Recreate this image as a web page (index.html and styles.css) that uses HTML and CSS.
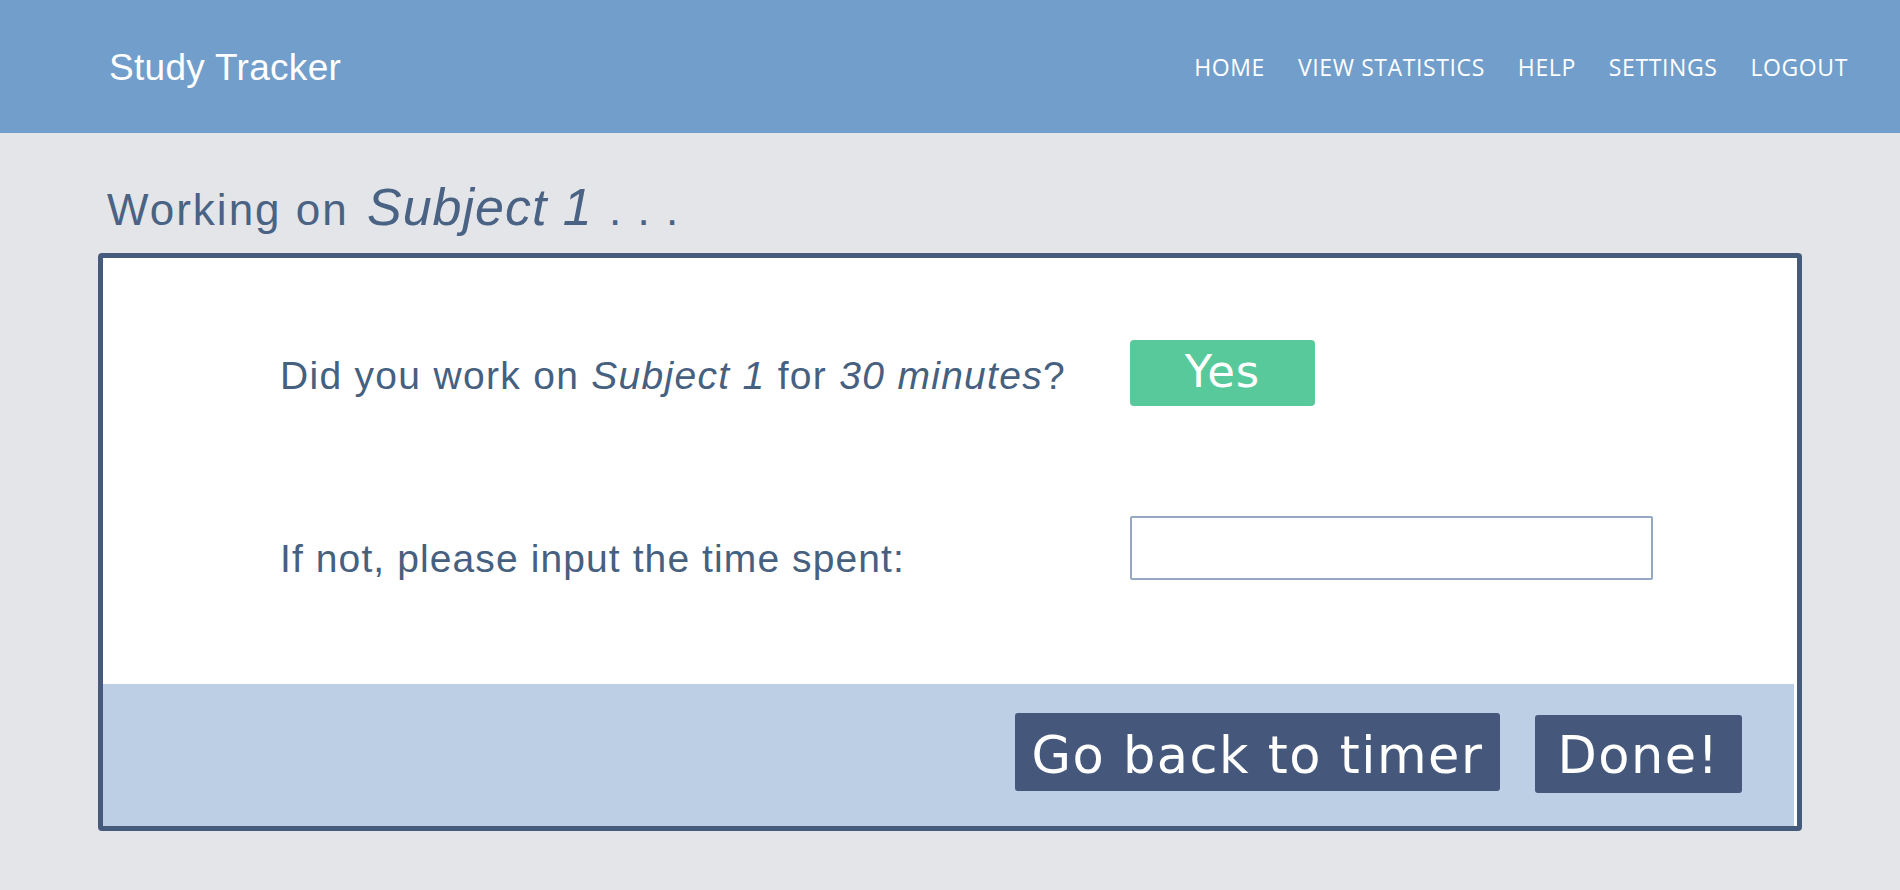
FILE: index.html
```html
<!DOCTYPE html>
<html lang="en">
<head>
<meta charset="utf-8">
<title>Study Tracker</title>
<link rel="stylesheet" href="styles.css">
</head>
<body>
<header class="topbar">
  <div class="brand">Study Tracker</div>
  <nav class="nav">
    <a class="nav-link" href="#">HOME</a>
    <a class="nav-link" href="#">VIEW STATISTICS</a>
    <a class="nav-link" href="#">HELP</a>
    <a class="nav-link" href="#">SETTINGS</a>
    <a class="nav-link" href="#">LOGOUT</a>
  </nav>
</header>
<main class="content">
  <h1 class="title">Working on <em class="title-subject">Subject 1</em> . . .</h1>
  <section class="card">
    <div class="card-body">
      <div class="label label-first">Did you work on <em>Subject 1</em> for <em>30 minutes</em>?</div>
      <div class="control"><button class="btn-yes">Yes</button></div>
      <div class="label label-second">If not, please input the time spent:</div>
      <div class="control"><input class="time-input" type="text"></div>
    </div>
    <div class="card-footer">
      <button class="btn-dark btn-back">Go back to timer</button>
      <button class="btn-dark btn-done">Done!</button>
    </div>
  </section>
</main>
</body>
</html>
```
FILE: styles.css
```css
html, body {
  margin: 0;
  padding: 0;
}
body {
  background: #e3e5e9;
  font-family: "Liberation Sans", Arial, sans-serif;
  color: #46607f;
  width: 1900px;
  height: 890px;
  overflow: hidden;
}
.topbar {
  height: 133px;
  background: #729ecb;
  display: flex;
  align-items: center;
  justify-content: space-between;
  padding: 0 52px 0 109px;
}
.brand {
  color: #ffffff;
  font-size: 37px;
  letter-spacing: 0.3px;
  padding-top: 2px;
}
.nav {
  display: flex;
  gap: 33px;
}
.nav-link {
  font-family: "Open Sans", sans-serif;
  font-size: 23px;
  color: #ffffff;
  text-decoration: none;
  letter-spacing: 0.6px;
}
.content {
  padding: 0 98px;
}
.title {
  margin: 44px 0 13px 9px;
  font-weight: normal;
  font-size: 44px;
  line-height: 60px;
  letter-spacing: 2px;
  color: #4a6283;
}
.title-subject {
  font-size: 52px;
  letter-spacing: 1px;
  margin-left: 4px;
  margin-right: 2px;
}
.card {
  background: #ffffff;
  border: 5px solid #465a7c;
  border-radius: 4px;
}
.card-body {
  display: grid;
  grid-template-columns: 850px auto;
  grid-template-rows: 66px 64px;
  row-gap: 110px;
  align-items: center;
  padding: 82px 0 104px 177px;
}
.label {
  font-size: 39px;
  letter-spacing: 1.1px;
  color: #46607f;
  white-space: nowrap;
}
.label-first {
  padding-top: 5px;
  letter-spacing: 1.3px;
}
.label-second {
  padding-top: 22px;
}
.control {
  display: flex;
  align-items: center;
}
.btn-yes {
  width: 185px;
  height: 66px;
  border: none;
  border-radius: 4px;
  background: #58c99a;
  color: #ffffff;
  font-family: "DejaVu Sans", sans-serif;
  font-size: 45px;
  letter-spacing: 1px;
  padding: 0 0 4px 0;
  line-height: 1;
}
.time-input {
  box-sizing: border-box;
  width: 523px;
  height: 64px;
  border: 2px solid #95a7c1;
  border-radius: 2px;
  background: #ffffff;
  margin: 0;
}
.card-footer {
  height: 142px;
  box-sizing: border-box;
  background: #bdcfe4;
  margin-right: 3px;
  display: flex;
  justify-content: flex-end;
  align-items: center;
  gap: 35px;
  padding: 0 52px 7px 0;
}
.btn-dark {
  height: 78px;
  border: none;
  border-radius: 3px;
  background: #45577a;
  color: #ffffff;
  font-family: "DejaVu Sans", sans-serif;
  font-size: 51px;
  letter-spacing: 1.5px;
  line-height: 1;
  padding: 8px 0 0 0;
  display: flex;
  align-items: center;
  justify-content: center;
}
.btn-back {
  width: 485px;
}
.btn-done {
  width: 207px;
  margin-top: 4px;
  padding-top: 4px;
}
```
